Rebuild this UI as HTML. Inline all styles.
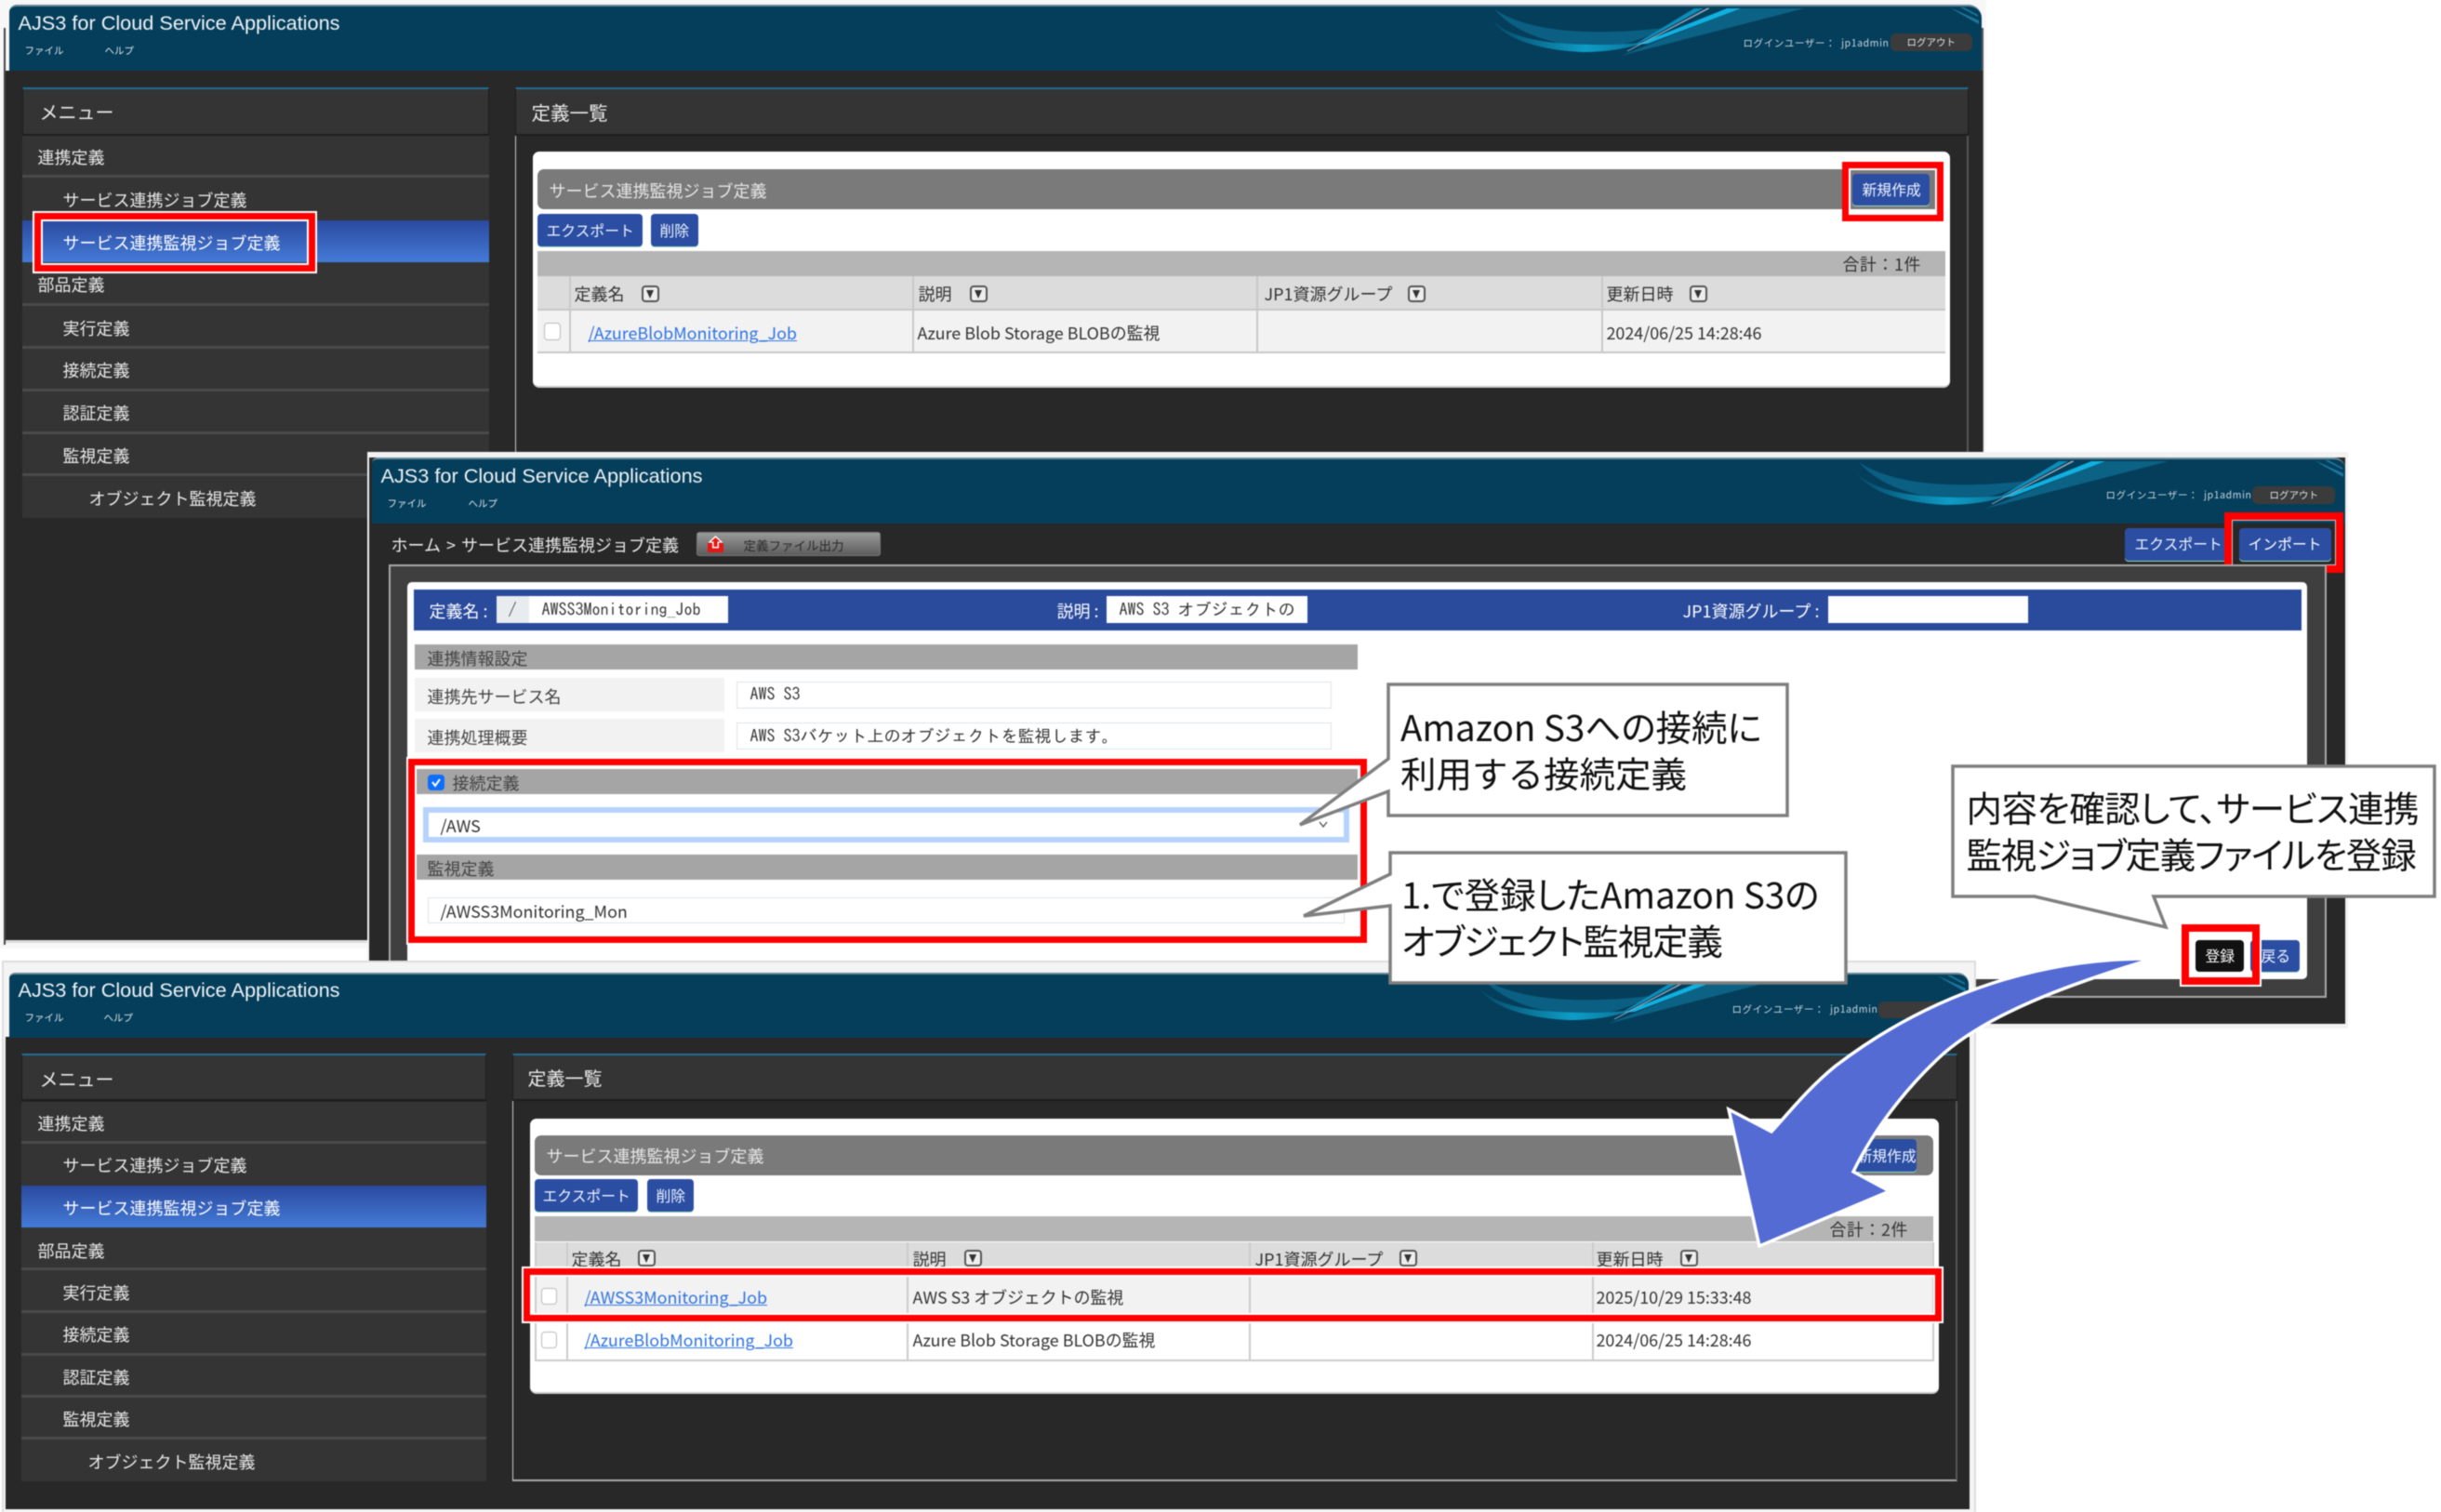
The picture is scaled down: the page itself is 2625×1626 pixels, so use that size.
<!DOCTYPE html>
<html lang="ja"><head><meta charset="utf-8"><title>AJS3 for Cloud Service Applications</title>
<style>
html,body{margin:0;padding:0;background:#fff}
body{position:relative;width:2625px;height:1626px;overflow:hidden;font-family:"Noto Sans CJK JP","Liberation Sans",sans-serif;font-size:18px;color:#333;filter:blur(.5px)}
.b{position:absolute;box-sizing:border-box}
.t{position:absolute;white-space:nowrap;line-height:30px;height:30px;margin-top:-15px;margin-left:-.5px}
.w{color:#e9e9e9}.d{color:#444}
.h{background:#053e5b}
.ttl{font-family:"Liberation Sans",sans-serif;font-size:21.7px;color:#eef3f6;letter-spacing:0}
.sm{font-size:10.5px;color:#dfe6ea}
.mh{background:#343434;border-top:2px solid #1f6f9a;border-bottom:2px solid #1d1d1d;border-left:1px solid #1d1d1d;border-right:1px solid #1d1d1d}
.row{background:#343434;border-bottom:3px solid #4a4a4a}
.sel{background:linear-gradient(#2b4a9f,#447bd8)}
.btn{background:#2b4ea3;border-radius:4px;box-shadow:0 1px 0 #9db}
.bt{font-size:15.8px;color:#f0f4ff}
.rb{position:absolute;box-sizing:border-box;border:7px solid #f00;box-shadow:0 0 0 2px #fff,inset 0 0 0 2px #fff}
.f{position:absolute;box-sizing:border-box;width:19px;height:18px;border:2px solid #555;border-radius:4px;background:#eee}
.f:after{content:"";position:absolute;left:3px;top:3px;border-left:4.5px solid transparent;border-right:4.5px solid transparent;border-top:9px solid #333}
.cb{position:absolute;box-sizing:border-box;background:#fff;border:1.5px solid #bbb;border-radius:4px}
.l{color:#2f74e0;text-decoration:underline;font-size:17.9px}
.tx{font-size:17.9px;color:#333}
.m{font-family:"IPAGothic","Noto Sans CJK JP",monospace;font-size:18px;color:#333}
.inp{background:#fff;border:1.5px solid #dfe2e8}
.cal{font-size:38.5px;color:#111;line-height:50px;height:50px;margin-top:-26.5px;position:absolute;white-space:nowrap;font-feature-settings:"palt"}
svg{position:absolute;left:0;top:0}
</style></head><body>

<svg width="0" height="0" style="position:absolute"><defs>
<linearGradient id="g1" x1="0" x2="1" y1="0" y2="0"><stop offset="0" stop-color="#064a69"/><stop offset=".6" stop-color="#0e9cc6"/><stop offset="1" stop-color="#0a6f94"/></linearGradient>
<g id="sw">
<path d="M1607 10C1640 32 1700 40 1790 30 1770 40 1750 50 1720 50 1670 50 1630 36 1607 10Z" fill="#0a5f82"/>
<path d="M1605 22C1625 42 1665 48 1723 48 1740 48 1755 47 1772 45 1750 52 1730 56 1700 56 1660 54 1620 44 1605 22Z" fill="url(#g1)"/>
<path d="M1940 9L1870 9 1743 60Z" fill="#137fa6" opacity=".55"/>
<path d="M1857 9H1872L1772 47 1760 48Z" fill="#10b0e0"/>
<path d="M1822 9L1832 9 1770 43 1756 49Z" fill="#0d8db8"/>
<path d="M1838 9L1836 9 1750 55Z" fill="#9ab" stroke="#9ab" stroke-width=".8"/>
<path d="M2097 8L2128 22 2128 26 2105 13ZM2108 8L2127 18 2127 16 2112 8Z" fill="#1f86ad" opacity=".8"/>
</g></defs></svg>

<!-- PANEL 1 -->
<div class="b" style="left:0;top:0;width:2136px;height:1020px;background:#f7f7f7"></div>
<div class="b" style="left:4px;top:30px;width:2px;height:986px;background:#444"></div>
<div class="b" style="left:2131px;top:30px;width:2px;height:986px;background:#555"></div>
<div class="b" style="left:6px;top:76px;width:2126px;height:938px;background:#282828;border-bottom:3px solid #ddd"></div>
<div class="b h" style="left:10px;top:5px;width:2121px;height:71px;border-radius:8px 14px 0 0;border-top:2px solid #6a8b9b"></div>
<svg width="2625" height="100"><use href="#sw"/></svg>
<div class="t ttl" style="left:20px;top:25px">AJS3 for Cloud Service Applications</div>
<div class="t sm" style="left:27px;top:55px">ファイル</div><div class="t sm" style="left:113px;top:55px">ヘルプ</div>
<div class="t sm" style="left:1875px;top:47px;color:#c6d6de;letter-spacing:.6px">ログインユーザー：&nbsp; jp1admin</div>
<div class="b" style="left:2033px;top:36px;width:88px;height:19px;background:#3b3b3b;border-radius:6px"></div>
<div class="t sm" style="left:2051px;top:46px">ログアウト</div>

<div class="b mh" style="left:24px;top:94px;width:502px;height:52px"></div>
<div class="t w" style="left:43px;top:120px;font-size:20px">メニュー</div>
<div class="b row" style="left:24px;top:146px;width:502px;height:45px"></div><div class="t w" style="left:41px;top:169px">連携定義</div>
<div class="b row" style="left:24px;top:191px;width:502px;height:46px;border-bottom:0"></div><div class="t w" style="left:68px;top:215px">サービス連携ジョブ定義</div>
<div class="b sel" style="left:24px;top:237px;width:502px;height:45px"></div><div class="t" style="left:68px;top:261px;color:#fff">サービス連携監視ジョブ定義</div>
<div class="b row" style="left:24px;top:282px;width:502px;height:47px"></div><div class="t w" style="left:41px;top:306px">部品定義</div>
<div class="b row" style="left:24px;top:329px;width:502px;height:46px"></div><div class="t w" style="left:68px;top:353px">実行定義</div>
<div class="b row" style="left:24px;top:375px;width:502px;height:46px"></div><div class="t w" style="left:68px;top:398px">接続定義</div>
<div class="b row" style="left:24px;top:421px;width:502px;height:46px"></div><div class="t w" style="left:68px;top:444px">認証定義</div>
<div class="b row" style="left:24px;top:467px;width:502px;height:45px"></div><div class="t w" style="left:68px;top:490px">監視定義</div>
<div class="b row" style="left:24px;top:512px;width:502px;height:45px;border-bottom:0"></div><div class="t w" style="left:96px;top:536px">オブジェクト監視定義</div>
<div class="rb" style="left:37px;top:229px;width:302px;height:63px"></div>

<div class="b mh" style="left:554px;top:94px;width:1563px;height:52px"></div>
<div class="b" style="left:554px;top:146px;width:1563px;height:860px;border-left:1px solid #ccc;border-right:2px solid #555"></div>
<div class="t w" style="left:572px;top:119.5px;font-size:20.5px">定義一覧</div>
<div class="b" style="left:573px;top:163px;width:1524px;height:254px;background:#fff;border-radius:7px;border-bottom:2px solid #ccc"></div>
<div class="b" style="left:578px;top:182px;width:1507px;height:43px;background:#7a7a7a;border-radius:7px 0 0 7px"></div>
<div class="t" style="left:591px;top:205px;color:#e6e6e6">サービス連携監視ジョブ定義</div>
<div class="b btn" style="left:1992px;top:187px;width:83px;height:34px"></div><div class="t bt" style="left:2003px;top:204px">新規作成</div>
<div class="rb" style="left:1981px;top:174px;width:109px;height:64px;box-shadow:inset 0 0 0 2px #fff"></div>
<div class="b btn" style="left:578px;top:230px;width:113px;height:35px"></div><div class="t bt" style="left:588px;top:248px">エクスポート</div>
<div class="b btn" style="left:700px;top:230px;width:51px;height:35px"></div><div class="t bt" style="left:710px;top:248px">削除</div>
<div class="b" style="left:578px;top:270px;width:1514px;height:27px;background:#b5b5b5"></div>
<div class="t tx" style="left:1982px;top:284px;letter-spacing:.6px">合計：1件</div>
<div class="b" style="left:578px;top:297px;width:1514px;height:37px;background:#dcdcdc;border-bottom:2px solid #c8c8c8"></div>
<div class="b" style="left:578px;top:334px;width:1514px;height:46px;background:#f2f2f2;border-bottom:2px solid #c8c8c8"></div>
<div class="b" style="left:612px;top:297px;width:2px;height:83px;background:#c8c8c8"></div>
<div class="b" style="left:981px;top:297px;width:2px;height:83px;background:#c8c8c8"></div>
<div class="b" style="left:1351px;top:297px;width:2px;height:83px;background:#c8c8c8"></div>
<div class="b" style="left:1722px;top:297px;width:2px;height:83px;background:#c8c8c8"></div>
<div class="t" style="left:618px;top:316px">定義名</div><div class="f" style="left:690px;top:307px"></div>
<div class="t" style="left:988px;top:316px">説明</div><div class="f" style="left:1043px;top:307px"></div>
<div class="t" style="left:1360px;top:316px">JP1資源グループ</div><div class="f" style="left:1514px;top:307px"></div>
<div class="t" style="left:1728px;top:316px">更新日時</div><div class="f" style="left:1817px;top:307px"></div>
<div class="cb" style="left:585px;top:347px;width:18px;height:19px"></div>
<div class="t l" style="left:633px;top:358px">/AzureBlobMonitoring_Job</div>
<div class="t tx" style="left:987px;top:358px">Azure Blob Storage BLOBの監視</div>
<div class="t tx" style="left:1728px;top:358px">2024/06/25 14:28:46</div>

<!-- PANEL 2 -->
<div class="b" style="left:395px;top:486px;width:2130px;height:620px;background:#f2f2f2"></div>
<div class="b" style="left:397px;top:492px;width:2125px;height:609px;background:#282828"></div>
<div class="b h" style="left:400px;top:492px;width:2122px;height:71px;border-radius:6px 12px 0 0;border-top:2px solid #6a8b9b"></div>
<svg width="2625" height="700"><use href="#sw" transform="translate(392 487)"/></svg>
<div class="t ttl" style="left:410px;top:512px">AJS3 for Cloud Service Applications</div>
<div class="t sm" style="left:417px;top:542px">ファイル</div><div class="t sm" style="left:504px;top:542px">ヘルプ</div>
<div class="t sm" style="left:2265px;top:533px;color:#c6d6de;letter-spacing:.6px">ログインユーザー：&nbsp; jp1admin</div>
<div class="b" style="left:2422px;top:523px;width:89px;height:19px;background:#3b3b3b;border-radius:6px"></div>
<div class="t sm" style="left:2441px;top:533px">ログアウト</div>
<div class="t w" style="left:421px;top:586px;font-size:18px;word-spacing:2px">ホーム &gt; サービス連携監視ジョブ定義</div>
<div class="b" style="left:749px;top:572px;width:198px;height:26px;background:linear-gradient(#9a9a9a,#5c5c5c);border-radius:3px;border:1px solid #777"></div>
<svg width="2625" height="700"><path d="M761 584h17v10h-17z" fill="#e81515"/><path d="M769.5 576l8 7.500h-4.500v6h-7v-6h-4.500z" fill="#fff"/><path d="M769.500 578l5 4.500h-3v5.500h-4v-5.500h-3z" fill="#e81515"/></svg>
<div class="t" style="left:800px;top:586px;font-size:13.5px;color:#2a2a2a">定義ファイル出力</div>
<div class="b btn" style="left:2285px;top:568px;width:115px;height:35px"></div><div class="t bt" style="left:2296px;top:585px">エクスポート</div>
<div class="b btn" style="left:2408px;top:568px;width:99px;height:35px"></div><div class="t" style="left:2418px;top:585px;color:#fff;font-size:15.800px">インポート</div>
<div class="rb" style="left:2392px;top:551px;width:128px;height:65px;border-width:8px;box-shadow:inset 0 0 0 1px #ccc"></div>

<div class="b" style="left:418px;top:607px;width:2084px;height:466px;background:#3f3f3f;border:2px solid #aaa"></div>
<div class="b" style="left:438px;top:626px;width:2043px;height:427px;background:#fff;border-radius:5px"></div>
<div class="b" style="left:445px;top:634px;width:2030px;height:44px;background:#2a4a9c"></div>
<div class="t" style="left:462px;top:657px;color:#fff">定義名 :</div>
<div class="b" style="left:534px;top:641px;width:249px;height:29px;background:#fff"></div>
<div class="b" style="left:534px;top:641px;width:35px;height:29px;background:#e9ecef"></div>
<div class="t m" style="left:547px;top:656px">/</div>
<div class="t m" style="left:583px;top:656px">AWSS3Monitoring_Job</div>
<div class="t" style="left:1137px;top:657px;color:#fff">説明 :</div>
<div class="b" style="left:1190px;top:641px;width:216px;height:29px;background:#fff"></div>
<div class="t m" style="left:1204px;top:656px">AWS S3 オブジェクトの</div>
<div class="t" style="left:1810px;top:657px;color:#fff">JP1資源グループ :</div>
<div class="b" style="left:1966px;top:641px;width:215px;height:29px;background:#fff"></div>

<div class="b" style="left:446px;top:693px;width:1014px;height:27px;background:#a5a5a5"></div>
<div class="t d" style="left:460px;top:708px">連携情報設定</div>
<div class="b" style="left:446px;top:729px;width:333px;height:36px;background:#f2f2f2"></div>
<div class="t d" style="left:460px;top:749px">連携先サービス名</div>
<div class="b inp" style="left:792px;top:733px;width:640px;height:29px"></div>
<div class="t m" style="left:807px;top:747px">AWS S3</div>
<div class="b" style="left:446px;top:773px;width:333px;height:36px;background:#f2f2f2"></div>
<div class="t d" style="left:460px;top:793px">連携処理概要</div>
<div class="b inp" style="left:792px;top:777px;width:640px;height:29px"></div>
<div class="t m" style="left:807px;top:792px">AWS S3バケット上のオブジェクトを監視します。</div>

<div class="b" style="left:446px;top:827px;width:1014px;height:27px;background:#a5a5a5"></div>
<div class="b" style="left:460px;top:833px;width:18px;height:17px;background:#0d6efd;border-radius:4px"></div>
<svg width="2625" height="900"><path d="M465 841l3 4 5-7" fill="none" stroke="#fff" stroke-width="2"/></svg>
<div class="t d" style="left:487px;top:842px">接続定義</div>
<div class="b" style="left:455px;top:868px;width:996px;height:38px;background:#fff;border:6px solid #b6d3fb"></div>
<div class="t tx" style="left:474px;top:888px">/AWS</div>
<svg width="2625" height="1000"><path d="M1419 884l4 5 4-5" fill="none" stroke="#555" stroke-width="1.4"/><path d="M1419 977l4 5 4-5" fill="none" stroke="#555" stroke-width="1.4"/></svg>
<div class="b" style="left:446px;top:919px;width:1014px;height:27px;background:#a5a5a5"></div>
<div class="t d" style="left:460px;top:934px">監視定義</div>
<div class="b inp" style="left:460px;top:965px;width:986px;height:28px"></div>
<div class="t tx" style="left:474px;top:980px">/AWSS3Monitoring_Mon</div>
<div class="rb" style="left:439px;top:816px;width:1031px;height:198px"></div>

<div class="b" style="left:2361px;top:1011px;width:52px;height:34px;background:#111;border-radius:4px"></div>
<div class="t" style="left:2372px;top:1028px;font-size:15.800px;color:#fff">登録</div>
<div class="b btn" style="left:2420px;top:1011px;width:53px;height:34px"></div>
<div class="t bt" style="left:2432px;top:1028px">戻る</div>
<div class="rb" style="left:2346px;top:994px;width:84px;height:65px;border-width:8px;box-shadow:0 0 0 2px #fff"></div>

<!-- PANEL 3 -->
<div class="b" style="left:2px;top:1033px;width:2123px;height:593px;background:#f4f4f4;border:2px solid #ddd;border-bottom:0"></div>
<div class="b" style="left:6px;top:1115px;width:2112px;height:508px;background:#282828"></div>
<div class="b h" style="left:10px;top:1046px;width:2107px;height:70px;border-radius:6px 12px 0 0;border-top:2px solid #6a8b9b"></div>
<svg width="2625" height="1200"><use href="#sw" transform="translate(-14 1041)"/></svg>
<div class="t ttl" style="left:20px;top:1065px">AJS3 for Cloud Service Applications</div>
<div class="t sm" style="left:27px;top:1095px">ファイル</div><div class="t sm" style="left:112px;top:1095px">ヘルプ</div>
<div class="t sm" style="left:1863px;top:1086px;color:#c6d6de;letter-spacing:.6px">ログインユーザー：&nbsp; jp1admin</div>
<div class="b" style="left:2020px;top:1077px;width:88px;height:18px;background:#3b3b3b;border-radius:6px"></div>

<div class="b mh" style="left:23px;top:1133px;width:500px;height:51px"></div>
<div class="t w" style="left:43px;top:1160px;font-size:20px">メニュー</div>
<div class="b row" style="left:23px;top:1185px;width:500px;height:45px"></div><div class="t w" style="left:41px;top:1208px">連携定義</div>
<div class="b row" style="left:23px;top:1230px;width:500px;height:45px;border-bottom:0"></div><div class="t w" style="left:68px;top:1253px">サービス連携ジョブ定義</div>
<div class="b sel" style="left:23px;top:1275px;width:500px;height:45px"></div><div class="t" style="left:68px;top:1299px;color:#fff">サービス連携監視ジョブ定義</div>
<div class="b row" style="left:23px;top:1320px;width:500px;height:46px"></div><div class="t w" style="left:41px;top:1345px">部品定義</div>
<div class="b row" style="left:23px;top:1366px;width:500px;height:46px"></div><div class="t w" style="left:68px;top:1390px">実行定義</div>
<div class="b row" style="left:23px;top:1412px;width:500px;height:46px"></div><div class="t w" style="left:68px;top:1435px">接続定義</div>
<div class="b row" style="left:23px;top:1458px;width:500px;height:45px"></div><div class="t w" style="left:68px;top:1481px">認証定義</div>
<div class="b row" style="left:23px;top:1503px;width:500px;height:45px"></div><div class="t w" style="left:68px;top:1526px">監視定義</div>
<div class="b row" style="left:23px;top:1548px;width:500px;height:45px;border-bottom:0"></div><div class="t w" style="left:95px;top:1572px">オブジェクト監視定義</div>

<div class="b mh" style="left:551px;top:1133px;width:1554px;height:51px"></div>
<div class="b" style="left:551px;top:1184px;width:1554px;height:409px;border-left:1px solid #ccc;border-right:2px solid #555;border-bottom:2px solid #aaa"></div>
<div class="t w" style="left:568px;top:1159px;font-size:20px">定義一覧</div>
<div class="b" style="left:570px;top:1203px;width:1515px;height:296px;background:#fff;border-radius:7px;border-bottom:2px solid #ccc"></div>
<div class="b" style="left:575px;top:1221px;width:1504px;height:43px;background:#7a7a7a;border-radius:7px"></div>
<div class="t" style="left:588px;top:1243px;color:#e6e6e6">サービス連携監視ジョブ定義</div>
<div class="b btn" style="left:1985px;top:1225px;width:76px;height:35px"></div><div class="t bt" style="left:1998px;top:1243px">新規作成</div>
<div class="b btn" style="left:575px;top:1268px;width:111px;height:35px"></div><div class="t bt" style="left:584px;top:1286px">エクスポート</div>
<div class="b btn" style="left:696px;top:1268px;width:50px;height:35px"></div><div class="t bt" style="left:706px;top:1286px">削除</div>
<div class="b" style="left:575px;top:1308px;width:1504px;height:27px;background:#b5b5b5"></div>
<div class="t tx" style="left:1968px;top:1322px;letter-spacing:.6px">合計：2件</div>
<div class="b" style="left:575px;top:1336px;width:1504px;height:37px;background:#dcdcdc"></div>
<div class="b" style="left:575px;top:1373px;width:1504px;height:45px;background:#f2f2f2"></div>
<div class="b" style="left:575px;top:1418px;width:1504px;height:46px;background:#fff;border-bottom:2px solid #ccc"></div>
<div class="b" style="left:575px;top:1336px;width:2px;height:128px;background:#ccc"></div>
<div class="b" style="left:609px;top:1336px;width:2px;height:128px;background:#ccc"></div>
<div class="b" style="left:975px;top:1336px;width:2px;height:128px;background:#ccc"></div>
<div class="b" style="left:1343px;top:1336px;width:2px;height:128px;background:#ccc"></div>
<div class="b" style="left:1712px;top:1336px;width:2px;height:128px;background:#ccc"></div>
<div class="b" style="left:2078px;top:1336px;width:2px;height:128px;background:#ccc"></div>
<div class="t" style="left:615px;top:1354px">定義名</div><div class="f" style="left:686px;top:1344px"></div>
<div class="t" style="left:982px;top:1354px">説明</div><div class="f" style="left:1037px;top:1344px"></div>
<div class="t" style="left:1350px;top:1354px">JP1資源グループ</div><div class="f" style="left:1505px;top:1344px"></div>
<div class="t" style="left:1717px;top:1354px">更新日時</div><div class="f" style="left:1807px;top:1344px"></div>
<div class="cb" style="left:582px;top:1385px;width:17px;height:18px"></div>
<div class="t l" style="left:629px;top:1395px">/AWSS3Monitoring_Job</div>
<div class="t tx" style="left:982px;top:1395px">AWS S3 オブジェクトの監視</div>
<div class="t tx" style="left:1717px;top:1395px">2025/10/29 15:33:48</div>
<div class="cb" style="left:582px;top:1432px;width:17px;height:18px"></div>
<div class="t l" style="left:629px;top:1441px">/AzureBlobMonitoring_Job</div>
<div class="t tx" style="left:982px;top:1441px">Azure Blob Storage BLOBの監視</div>
<div class="t tx" style="left:1717px;top:1441px">2024/06/25 14:28:46</div>
<div class="rb" style="left:563px;top:1364px;width:1525px;height:57px"></div>

<!-- CALLOUTS & ARROW -->
<svg width="2625" height="1626">
<path d="M1493 736H1922V877H1493V851L1398 887 1493 816Z" fill="#fff" stroke="#7f7f7f" stroke-width="3.5"/>
<path d="M1495 917H1985V1057H1495V974L1402 985 1495 940Z" fill="#fff" stroke="#7f7f7f" stroke-width="3.5"/>
<path d="M2100 824H2618V964H2316L2329 997 2188 964H2100Z" fill="#fff" stroke="#7f7f7f" stroke-width="3.5"/>
<path d="M2315 1031C2200 1030 2080 1065 1973 1147 1945 1170 1925 1195 1905 1217L1859 1193 1892 1340 2032 1281 1993 1260C2020 1205 2060 1160 2090 1133 2140 1090 2220 1060 2315 1031Z" fill="#536bd3" stroke="#fff" stroke-width="3.500" stroke-linejoin="miter"/>
</svg>
<div class="cal" style="left:1506px;top:782px">Amazon S3への接続に</div>
<div class="cal" style="left:1506px;top:832px;font-feature-settings:normal">利用する接続定義</div>
<div class="cal" style="left:1507px;top:962px">1.で登録したAmazon S3の</div>
<div class="cal" style="left:1507px;top:1012px;letter-spacing:-1.2px">オブジェクト監視定義</div>
<div class="cal" style="left:2114.5px;top:869px;letter-spacing:-.6px">内容を確認して、サービス連携</div>
<div class="cal" style="left:2114.5px;top:919px;letter-spacing:-1.2px">監視ジョブ定義ファイルを登録</div>
</body></html>
